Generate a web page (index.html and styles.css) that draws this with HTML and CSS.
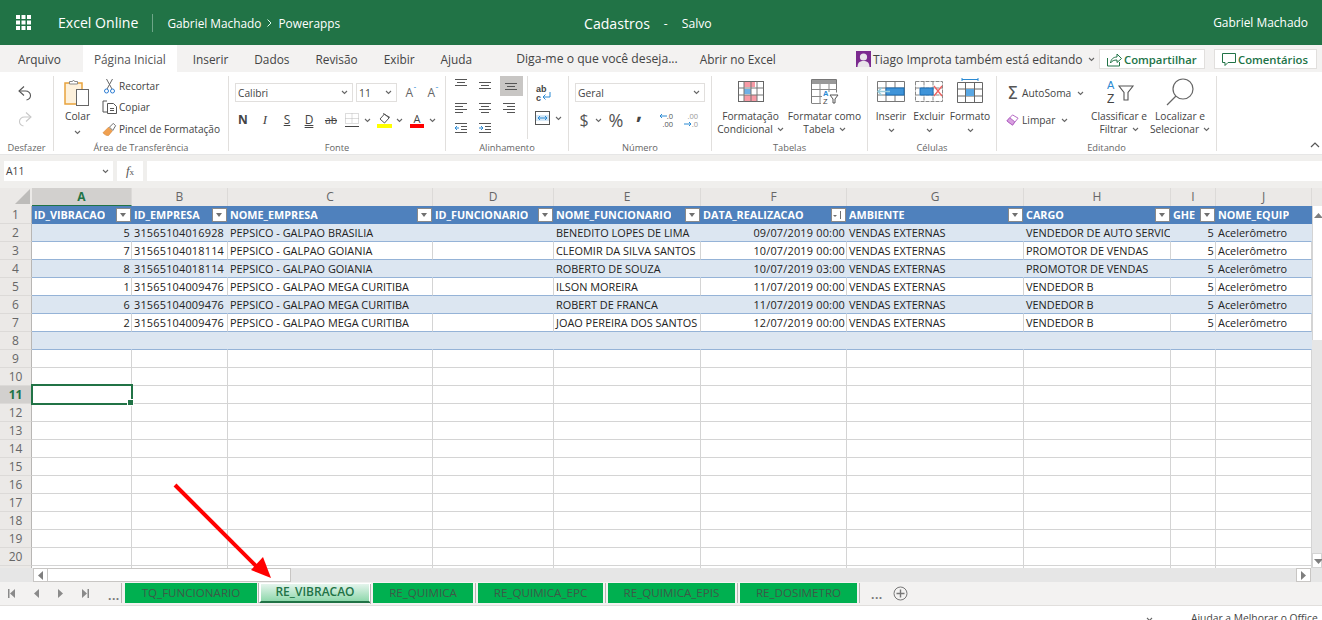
FILE: index.html
```html
<!DOCTYPE html>
<html lang="pt-BR">
<head>
<meta charset="utf-8">
<title>Cadastros - Excel Online</title>
<link rel="stylesheet" href="styles.css">
</head>
<body>
<svg class="defs" width="0" height="0" aria-hidden="true">
  <symbol id="chev" viewBox="0 0 7 5"><path d="M1 1l2.5 2.5L6 1" fill="none" stroke="#666" stroke-width="1.1"/></symbol>
  <symbol id="tri" viewBox="0 0 9 5"><path d="M0 0h9L4.5 5z" fill="#7f7f7f"/></symbol>
</svg>

<header class="topbar">
  <svg class="waffle" width="15" height="15" viewBox="0 0 15 15" fill="#fff"><rect width="4" height="4"/><rect x="5.5" width="4" height="4"/><rect x="11" width="4" height="4"/><rect y="5.5" width="4" height="4"/><rect x="5.5" y="5.5" width="4" height="4"/><rect x="11" y="5.5" width="4" height="4"/><rect y="11" width="4" height="4"/><rect x="5.5" y="11" width="4" height="4"/><rect x="11" y="11" width="4" height="4"/></svg>
  <span class="brand">Excel Online</span>
  <span class="crumbs">Gabriel Machado<svg class="crumb-sep" width="7" height="10" viewBox="0 0 7 10"><path d="M1.5 1.5L5 5 1.5 8.5" fill="none" stroke="#dfe" stroke-width="1"/></svg>Powerapps</span>
  <span class="doc"><span class="doc-name">Cadastros</span><span class="doc-dash">-</span><span class="doc-state">Salvo</span></span>
  <span class="user">Gabriel Machado</span>
</header>

<nav class="tabs">
  <span class="tab first">Arquivo</span>
  <span class="tab active">Página Inicial</span>
  <span class="tab">Inserir</span>
  <span class="tab">Dados</span>
  <span class="tab">Revisão</span>
  <span class="tab">Exibir</span>
  <span class="tab">Ajuda</span>
  <span class="tab tell">Diga-me o que você deseja...</span>
  <span class="tab open">Abrir no Excel</span>
  <span class="coauth">
    <svg width="15" height="16" viewBox="0 0 15 16"><rect width="15" height="16" fill="#7b2a8f"/><circle cx="7.5" cy="6" r="3.6" fill="#e9e4ea"/><path d="M1.5 16c0-4.5 2.5-6 6-6s6 1.500 6 6z" fill="#e9e4ea"/></svg>
    <span>Tiago Improta também está editando</span>
    <svg class="chev" width="7" height="5"><use href="#chev"/></svg>
  </span>
  <span class="pill share">
    <svg width="17" height="16" viewBox="0 0 17 16" fill="none" stroke="#217346"><path d="M1.500 7v8h12V11"/><path d="M4.500 12c.5-4 3-6 6.500-6V3l4.500 4.500L11 11.500V9c-3 0-5 .8-6.500 3z"/></svg>
    Compartilhar
  </span>
  <span class="pill comments">
    <svg width="16" height="15" viewBox="0 0 16 15" fill="none" stroke="#217346"><path d="M1.500 1.500h13v9H7l-3 3v-3H1.500z"/></svg>
    Comentários
  </span>
</nav>

<section class="ribbon">
  <div class="group g-undo">
    <div class="body undo-body">
      <svg width="16" height="16" viewBox="0 0 16 16" fill="none" stroke="#555" stroke-width="1.100"><path d="M7 1.500L2 6l5 4.500"/><path d="M2 6h6.500c3 0 5 2 5 4.500s-2 4-4 4.500"/></svg>
      <svg width="16" height="16" viewBox="0 0 16 16" fill="none" stroke="#c8c8c8" stroke-width="1.100"><path d="M9 1.500L14 6l-5 4.500"/><path d="M14 6H7.500c-3 0-5 2-5 4.500s2 4 4 4.500"/></svg>
    </div>
    <div class="label">Desfazer</div>
  </div>

  <div class="group g-clip">
    <div class="body">
      <div class="paste">
        <svg width="26" height="28" viewBox="0 0 26 28"><rect x="1" y="4" width="17" height="21" fill="#fdf1dc" stroke="#e8a33d" stroke-width="1.500"/><path d="M5.500 5V2.500h3l1-1.500 1 1.500h3V5z" fill="#fff" stroke="#888"/><rect x="12.500" y="10.500" width="12" height="16" fill="#fff" stroke="#666"/></svg>
        <span class="paste-text">Colar</span>
        <svg class="chev" width="7" height="5"><use href="#chev"/></svg>
      </div>
      <div class="clip-list">
        <div class="clip-row"><svg width="14" height="16" viewBox="0 0 14 16" fill="none" stroke="#666"><path d="M4 1l5.500 10M10 1L4.500 11"/><circle cx="4" cy="13" r="2" stroke="#2b7cd3"/><circle cx="10" cy="13" r="2" stroke="#2b7cd3"/></svg><span>Recortar</span></div>
        <div class="clip-row"><svg width="15" height="14" viewBox="0 0 15 14" fill="none" stroke="#555"><path d="M5 1H1v11h4"/><path d="M5.500 3.500h6l3 3v7h-9z" fill="#fff"/><path d="M8 8.500h4M8 10.500h4"/></svg><span>Copiar</span></div>
        <div class="clip-row"><svg width="16" height="16" viewBox="0 0 16 16"><path d="M1 12l6-6 4 4-4 5c-3 0-4-1-6-3z" fill="#f0a050" stroke="#d08030" stroke-width=".6"/><path d="M8 6l4-4 2.500 2.500-3 5z" fill="#fff" stroke="#666"/></svg><span>Pincel de Formatação</span></div>
      </div>
    </div>
    <div class="label">Área de Transferência</div>
  </div>

  <div class="group g-font">
    <div class="body col">
      <div class="font-row1">
        <span class="select font-name">Calibri<svg class="chev" width="7" height="5"><use href="#chev"/></svg></span>
        <span class="select font-size">11<svg class="chev" width="7" height="5"><use href="#chev"/></svg></span>
        <span class="grow">A<sup>ˆ</sup></span>
        <span class="shrink">A<sup>ˇ</sup></span>
      </div>
      <div class="font-row2">
        <b class="fmt">N</b>
        <i class="fmt serif">I</i>
        <span class="fmt under">S</span>
        <span class="fmt under dbl">D</span>
        <span class="fmt strike">ab</span>
        <svg class="borders" width="14" height="14" viewBox="0 0 14 14" fill="none" stroke="#bbb"><path stroke-dasharray="1 1" d="M.500.500h13v10H.500zM7 .500v10M.500 5.500h13"/><path d="M0 13.500h14" stroke="#444"/></svg>
        <svg class="chev c1" width="7" height="5"><use href="#chev"/></svg>
        <svg class="fill" width="15" height="16" viewBox="0 0 15 16"><path d="M3 7l4.500-5L12 6l-4.500 5z" fill="#fff" stroke="#555"/><path d="M6 1.500l7 4" stroke="#555" fill="none"/><rect y="12" width="15" height="4" fill="#ffff00"/></svg>
        <svg class="chev c2" width="7" height="5"><use href="#chev"/></svg>
        <span class="color-a"><span>A</span></span>
        <svg class="chev c3" width="7" height="5"><use href="#chev"/></svg>
      </div>
    </div>
    <div class="label">Fonte</div>
  </div>

  <div class="group g-align">
    <div class="body">
      <div class="align-grid">
        <svg width="24" height="22" viewBox="0 0 24 22" stroke="#555"><path d="M6 3.500h12M8 6.500h8M6 9.500h12"/></svg>
        <svg width="24" height="22" viewBox="0 0 24 22" stroke="#555"><path d="M6 6.500h12M8 9.500h8M6 12.500h12"/></svg>
        <span class="align-on"><svg width="24" height="22" viewBox="0 0 24 22" stroke="#555"><path d="M6 9.500h12M8 12.500h8M6 15.500h12"/></svg></span>
        <svg width="24" height="22" viewBox="0 0 24 22" stroke="#555"><path d="M6 4.500h12M6 7.500h8M6 10.500h12M6 13.500h8"/></svg>
        <svg width="24" height="22" viewBox="0 0 24 22" stroke="#555"><path d="M6 4.500h12M8 7.500h8M6 10.500h12M8 13.500h8"/></svg>
        <svg width="24" height="22" viewBox="0 0 24 22" stroke="#555"><path d="M6 4.500h12M10 7.500h8M6 10.500h12M10 13.500h8"/></svg>
        <svg width="24" height="22" viewBox="0 0 24 22" stroke="#555"><path d="M6 3.500h12M12 6.500h6M12 9.500h6M6 12.500h12"/><path d="M10 8H6m2-2L6 8l2 2" stroke="#2b8ad3" fill="none"/></svg>
        <svg width="24" height="22" viewBox="0 0 24 22" stroke="#555"><path d="M6 3.500h12M12 6.500h6M12 9.500h6M6 12.500h12"/><path d="M6 8h4M8 6l2 2-2 2" stroke="#2b8ad3" fill="none"/></svg>
      </div>
      <div class="align-side">
        <svg class="wrap" width="20" height="20" viewBox="0 0 20 20" fill="none"><text x="2" y="8" font-size="9" font-weight="700" fill="#444" font-family="Liberation Sans">ab</text><text x="2" y="17" font-size="9" font-weight="700" fill="#444" font-family="Liberation Sans">c</text><path d="M16 8v5H9m2.500-2.500L9 13l2.500 2.500" stroke="#2b8ad3"/></svg>
        <div class="merge">
          <svg width="15" height="14" viewBox="0 0 15 14" fill="none"><rect x=".5" y=".5" width="14" height="13" stroke="#555"/><rect x="1" y="4" width="13" height="6" fill="#d5e8f7"/><path d="M3 7h9M5 5L3 7l2 2M10 5l2 2-2 2" stroke="#2b8ad3"/></svg>
          <svg class="chev" width="7" height="5"><use href="#chev"/></svg>
        </div>
      </div>
    </div>
    <div class="label">Alinhamento</div>
  </div>

  <div class="group g-num">
    <div class="body col">
      <span class="select num-format">Geral<svg class="chev" width="7" height="5"><use href="#chev"/></svg></span>
      <div class="num-row">
        <span class="dollar">$</span>
        <svg class="chev" width="7" height="5"><use href="#chev"/></svg>
        <span class="pct">%</span>
        <span class="comma">,</span>
        <span class="dec">
          <small class="dec-line"><svg width="8" height="6" viewBox="0 0 8 6" fill="none" stroke="#2b8ad3"><path d="M8 3H1m2-2L1 3l2 2"/></svg>.0</small>
          <small class="dec-line">.00</small>
        </span>
        <span class="dec light">
          <small class="dec-line">.00</small>
          <small class="dec-line"><svg width="8" height="6" viewBox="0 0 8 6" fill="none" stroke="#2b8ad3"><path d="M0 3h7M5 1l2 2-2 2"/></svg>.0</small>
        </span>
      </div>
    </div>
    <div class="label">Número</div>
  </div>

  <div class="group g-table">
    <div class="body">
      <div class="big w-cond">
        <svg class="big-ic cond" width="26" height="22" viewBox="0 0 26 22"><rect x=".5" y=".5" width="25" height="20" fill="#fff" stroke="#666"/><path d="M6 1h11v5H6zM6 14h13v6H6z" fill="#f79aa5"/><rect x="6" y="8" width="7" height="5" fill="#6fb0e6"/><path d="M6 .500v20M13 .500v20M19 .500v20M.5 7h25M.5 14h25" stroke="#777" fill="none"/></svg>
        <span>Formatação</span>
        <span>Condicional<svg class="chev" width="7" height="5"><use href="#chev"/></svg></span>
      </div>
      <div class="big w-ftable">
        <svg class="big-ic ftable" width="28" height="27" viewBox="0 0 28 27" fill="none"><path d="M.500 24.500V.500h25v13" stroke="#777"/><path d="M1 1h24v4H1z" fill="#999"/><path d="M1 10.500h25M1 17.500h10M9 5v20M18 5v8M1 24.500h9" stroke="#888"/><text x="12" y="16.500" font-size="7.500" fill="#2b8ad3" font-weight="700" font-family="Liberation Sans">A</text><text x="12" y="25" font-size="7.500" fill="#444" font-family="Liberation Sans">Z</text><path d="M19 16h8l-3 4v4h-2v-4z" stroke="#555"/></svg>
        <span>Formatar como</span>
        <span>Tabela<svg class="chev" width="7" height="5"><use href="#chev"/></svg></span>
      </div>
    </div>
    <div class="label">Tabelas</div>
  </div>

  <div class="group g-cell">
    <div class="body">
      <div class="big w-ins">
        <svg class="big-ic cell" width="28" height="22" viewBox="0 0 28 22" fill="none"><path d="M.500 .500h27v20H.500zM9 .5v20M18 .5v20M.5 7h27M.5 14h27" stroke="#777"/><rect x="9" y="7" width="18" height="7" fill="#3f94d9" stroke="#1d6fb5"/><path d="M1 10.500h12M5 6.500l-4 4 4 4" stroke="#9cd" stroke-width="1.500"/></svg>
        <span>Inserir</span>
        <svg class="chev" width="7" height="5"><use href="#chev"/></svg>
      </div>
      <div class="big w-exc">
        <svg class="big-ic cell" width="28" height="22" viewBox="0 0 28 22" fill="none"><path d="M.500 .500h27v20H.500zM9 .5v20M18 .5v20M.5 7h27M.5 14h27" stroke="#888" stroke-dasharray="4 1"/><rect x="5" y="7" width="13" height="7" fill="#3f94d9" stroke="#1d6fb5"/><path d="M19 5l8 10M27 5l-8 10" stroke="#f0605f" stroke-width="1.300"/></svg>
        <span>Excluir</span>
        <svg class="chev" width="7" height="5"><use href="#chev"/></svg>
      </div>
      <div class="big w-fmt">
        <svg class="big-ic fmt-ic" width="26" height="25" viewBox="0 0 26 25" fill="none"><path d="M5 1.500h16M5 0v3M21 0v3" stroke="#2b8ad3"/><path d="M.500 4.500h25v20H.500zM8.500 4.500v20M17.500 4.500v20M.5 11h25M.5 18h25" stroke="#666"/><rect x="9" y="11" width="8" height="7" fill="#5aa7e3"/></svg>
        <span>Formato</span>
        <svg class="chev" width="7" height="5"><use href="#chev"/></svg>
      </div>
    </div>
    <div class="label">Células</div>
  </div>

  <div class="group g-edit">
    <div class="body">
      <div class="edit-list">
        <div class="edit-row"><span class="sigma">Σ</span><span>AutoSoma</span><svg class="chev" width="7" height="5"><use href="#chev"/></svg></div>
        <div class="edit-row"><svg class="eraser" width="14" height="14" viewBox="0 0 14 14"><path d="M1 8l6-6.500L13 5l-6 7.500z" fill="#fff" stroke="#b060c0"/><path d="M1 8l3-3.500L9.500 9 7 12.500z" fill="#d8a0e0" stroke="#b060c0"/></svg><span>Limpar</span><svg class="chev" width="7" height="5"><use href="#chev"/></svg></div>
      </div>
      <div class="big w-sort">
        <svg class="big-ic sort" width="28" height="28" viewBox="0 0 28 28" fill="none"><text x="0" y="11" font-size="11" fill="#2b8ad3" font-family="Liberation Sans">A</text><text x="0" y="25" font-size="12" fill="#444" font-family="Liberation Sans">Z</text><path d="M12 8h14l-5 6.500V22h-4v-7.500z" stroke="#555" stroke-width="1.100"/></svg>
        <span>Classificar e</span>
        <span>Filtrar<svg class="chev" width="7" height="5"><use href="#chev"/></svg></span>
      </div>
      <div class="big w-find">
        <svg class="big-ic find" width="28" height="28" viewBox="0 0 28 28" fill="none" stroke="#666"><circle cx="17" cy="11" r="10" stroke-width="1.200"/><path d="M10 18L1 27" stroke-width="1.200"/></svg>
        <span>Localizar e</span>
        <span>Selecionar<svg class="chev" width="7" height="5"><use href="#chev"/></svg></span>
      </div>
    </div>
    <div class="label">Editando</div>
  </div>

  <svg class="collapse" width="10" height="6" viewBox="0 0 10 6"><path d="M1 5l4-4 4 4" fill="none" stroke="#555" stroke-width="1.200"/></svg>
</section>

<section class="formula">
  <span class="namebox">A11<svg class="chev" width="7" height="5"><use href="#chev"/></svg></span>
  <span class="fx"><i>f</i><small>x</small></span>
  <span class="fbar"></span>
</section>

<section class="sheet">
  <div class="grid-wrap">
    <table class="grid">
      <colgroup><col class="c-h"><col class="c-a"><col class="c-b"><col class="c-c"><col class="c-d"><col class="c-e"><col class="c-f"><col class="c-g"><col class="c-h2"><col class="c-i"><col class="c-j"></colgroup>
      <thead>
        <tr>
          <th class="corner"><svg width="15" height="15" viewBox="0 0 15 15"><path d="M15 0v15H0z" fill="#bdbcba"/></svg></th>
          <th class="col-h sel">A</th><th class="col-h">B</th><th class="col-h">C</th><th class="col-h">D</th><th class="col-h">E</th><th class="col-h">F</th><th class="col-h">G</th><th class="col-h">H</th><th class="col-h">I</th><th class="col-h">J</th>
        </tr>
      </thead>
      <tbody>
        <tr class="tbl-head">
          <th class="row-h">1</th>
          <td><div class="hc"><span>ID_VIBRACAO</span><i class="filter"></i></div></td>
          <td><div class="hc"><span>ID_EMPRESA</span><i class="filter"></i></div></td>
          <td><div class="hc"><span>NOME_EMPRESA</span><i class="filter"></i></div></td>
          <td><div class="hc"><span>ID_FUNCIONARIO</span><i class="filter"></i></div></td>
          <td><div class="hc"><span>NOME_FUNCIONARIO</span><i class="filter"></i></div></td>
          <td><div class="hc"><span>DATA_REALIZACAO</span><i class="filter sorted"></i></div></td>
          <td><div class="hc"><span>AMBIENTE</span><i class="filter"></i></div></td>
          <td><div class="hc"><span>CARGO</span><i class="filter"></i></div></td>
          <td><div class="hc"><span>GHE</span><i class="filter"></i></div></td>
          <td><div class="hc"><span>NOME_EQUIP</span></div></td>
        </tr>
        <tr class="data band"><th class="row-h">2</th><td class="num">5</td><td class="num cnpj">31565104016928</td><td>PEPSICO - GALPAO BRASILIA</td><td></td><td>BENEDITO LOPES DE LIMA</td><td class="num">09/07/2019 00:00</td><td>VENDAS EXTERNAS</td><td>VENDEDOR DE AUTO SERVICO</td><td class="num">5</td><td>Acelerômetro</td></tr>
        <tr class="data"><th class="row-h">3</th><td class="num">7</td><td class="num cnpj">31565104018114</td><td>PEPSICO - GALPAO GOIANIA</td><td></td><td>CLEOMIR DA SILVA SANTOS</td><td class="num">10/07/2019 00:00</td><td>VENDAS EXTERNAS</td><td>PROMOTOR DE VENDAS</td><td class="num">5</td><td>Acelerômetro</td></tr>
        <tr class="data band"><th class="row-h">4</th><td class="num">8</td><td class="num cnpj">31565104018114</td><td>PEPSICO - GALPAO GOIANIA</td><td></td><td>ROBERTO DE SOUZA</td><td class="num">10/07/2019 03:00</td><td>VENDAS EXTERNAS</td><td>PROMOTOR DE VENDAS</td><td class="num">5</td><td>Acelerômetro</td></tr>
        <tr class="data"><th class="row-h">5</th><td class="num">1</td><td class="num cnpj">31565104009476</td><td>PEPSICO - GALPAO MEGA CURITIBA</td><td></td><td>ILSON MOREIRA</td><td class="num">11/07/2019 00:00</td><td>VENDAS EXTERNAS</td><td>VENDEDOR B</td><td class="num">5</td><td>Acelerômetro</td></tr>
        <tr class="data band"><th class="row-h">6</th><td class="num">6</td><td class="num cnpj">31565104009476</td><td>PEPSICO - GALPAO MEGA CURITIBA</td><td></td><td>ROBERT DE FRANCA</td><td class="num">11/07/2019 00:00</td><td>VENDAS EXTERNAS</td><td>VENDEDOR B</td><td class="num">5</td><td>Acelerômetro</td></tr>
        <tr class="data"><th class="row-h">7</th><td class="num">2</td><td class="num cnpj">31565104009476</td><td>PEPSICO - GALPAO MEGA CURITIBA</td><td></td><td>JOAO PEREIRA DOS SANTOS</td><td class="num">12/07/2019 00:00</td><td>VENDAS EXTERNAS</td><td>VENDEDOR B</td><td class="num">5</td><td>Acelerômetro</td></tr>
        <tr class="data band"><th class="row-h">8</th><td></td><td></td><td></td><td></td><td></td><td></td><td></td><td></td><td></td><td></td></tr>
        <tr><th class="row-h">9</th><td></td><td></td><td></td><td></td><td></td><td></td><td></td><td></td><td></td><td></td></tr>
        <tr><th class="row-h">10</th><td></td><td></td><td></td><td></td><td></td><td></td><td></td><td></td><td></td><td></td></tr>
        <tr><th class="row-h cur">11</th><td class="active-cell"></td><td></td><td></td><td></td><td></td><td></td><td></td><td></td><td></td><td></td></tr>
        <tr><th class="row-h">12</th><td></td><td></td><td></td><td></td><td></td><td></td><td></td><td></td><td></td><td></td></tr>
        <tr><th class="row-h">13</th><td></td><td></td><td></td><td></td><td></td><td></td><td></td><td></td><td></td><td></td></tr>
        <tr><th class="row-h">14</th><td></td><td></td><td></td><td></td><td></td><td></td><td></td><td></td><td></td><td></td></tr>
        <tr><th class="row-h">15</th><td></td><td></td><td></td><td></td><td></td><td></td><td></td><td></td><td></td><td></td></tr>
        <tr><th class="row-h">16</th><td></td><td></td><td></td><td></td><td></td><td></td><td></td><td></td><td></td><td></td></tr>
        <tr><th class="row-h">17</th><td></td><td></td><td></td><td></td><td></td><td></td><td></td><td></td><td></td><td></td></tr>
        <tr><th class="row-h">18</th><td></td><td></td><td></td><td></td><td></td><td></td><td></td><td></td><td></td><td></td></tr>
        <tr><th class="row-h">19</th><td></td><td></td><td></td><td></td><td></td><td></td><td></td><td></td><td></td><td></td></tr>
        <tr><th class="row-h">20</th><td></td><td></td><td></td><td></td><td></td><td></td><td></td><td></td><td></td><td></td></tr>
        <tr><th class="row-h"></th><td></td><td></td><td></td><td></td><td></td><td></td><td></td><td></td><td></td><td></td></tr>
      </tbody>
    </table>
    <div class="vscroll">
      <div class="v-head"></div>
      <div class="v-thumb"><svg width="9" height="5"><use href="#tri" transform="rotate(180 4.500 2.500)"/></svg></div>
      <div class="v-track"></div>
      <div class="v-btn"><svg width="9" height="5"><use href="#tri"/></svg></div>
    </div>
  </div>
  <div class="hscroll">
    <span class="h-btn"><svg width="5" height="9" viewBox="0 0 5 9"><path d="M5 0v9L0 4.500z" fill="#7f7f7f"/></svg></span>
    <span class="h-thumb"></span>
    <span class="h-track"></span>
    <span class="h-btn"><svg width="5" height="9" viewBox="0 0 5 9"><path d="M0 0v9l5-4.500z" fill="#7f7f7f"/></svg></span>
  </div>
</section>

<section class="sheetbar">
  <div class="nav">
    <svg width="7" height="9" viewBox="0 0 7 9" fill="#8a8a8a"><path d="M0 0h1.500v9H0zM7 0v9L2 4.500z"/></svg>
    <svg width="5" height="9" viewBox="0 0 5 9" fill="#8a8a8a"><path d="M5 0v9L0 4.500z"/></svg>
    <svg width="5" height="9" viewBox="0 0 5 9" fill="#8a8a8a"><path d="M0 0v9l5-4.500z"/></svg>
    <svg width="7" height="9" viewBox="0 0 7 9" fill="#8a8a8a"><path d="M0 0v9l5-4.500zM5.500 0H7v9H5.500z"/></svg>
    <span class="dots">...</span>
  </div>
  <span class="stab w1">TQ_FUNCIONARIO</span>
  <span class="stab on w2">RE_VIBRACAO</span>
  <span class="stab w3">RE_QUIMICA</span>
  <span class="stab w4">RE_QUIMICA_EPC</span>
  <span class="stab w5">RE_QUIMICA_EPIS</span>
  <span class="stab w6">RE_DOSIMETRO</span>
  <span class="dots more">...</span>
  <svg class="add" width="15" height="15" viewBox="0 0 15 15" fill="none" stroke="#777"><circle cx="7.500" cy="7.500" r="6.500"/><path d="M7.500 3.500v8M3.500 7.500h8" stroke-width="1.400"/></svg>
</section>

<footer class="status">
  <svg class="chev" width="7" height="5"><use href="#chev"/></svg>
  <span>Ajudar a Melhorar o Office</span>
</footer>

<svg class="arrow" width="110" height="110" viewBox="0 0 110 110"><path d="M4 4L88 88" stroke="#ff0000" stroke-width="4"/><path d="M80 89L92 76 100 97z" fill="#ff0000"/></svg>
</body>
</html>
```
FILE: styles.css
```css
* { box-sizing: border-box; }
html, body { margin: 0; height: 620px; overflow: hidden; }
body { font-family: "Open Sans", "Noto Sans", sans-serif; font-size: 11px; color: #444; background: #fff; position: relative; width: 1322px; }
.defs { position: absolute; }
svg { display: block; flex: none; }
small { font-size: inherit; }

/* title bar */
.topbar { height: 45px; background: #217346; color: #fff; display: flex; align-items: center; position: relative; }
.waffle { margin-left: 16px; }
.brand { margin-left: 27px; font-size: 14.100px; padding-right: 14px; border-right: 1px solid #6da688; height: 18px; line-height: 18px; white-space: nowrap; }
.crumbs { margin-left: 14px; font-size: 11.850px; display: flex; align-items: center; white-space: nowrap; }
.crumb-sep { margin: 0 5px 0 5px; }
.doc { position: absolute; left: 584px; top: 14px; display: flex; align-items: center; height: 18px; }
.doc-name { font-size: 14.100px; }
.doc-dash { margin-left: 14px; font-size: 12px; }
.doc-state { margin-left: 14px; font-size: 12.200px; }
.user { margin-left: auto; margin-right: 14px; font-size: 11.950px; white-space: nowrap; }

/* tab strip */
.tabs { height: 27px; background: #f3f2f1; display: flex; align-items: stretch; color: #444; font-size: 11.850px; white-space: nowrap; }
.tab { display: flex; align-items: center; margin-right: 26px; }
.tab.first { margin-left: 18px; margin-right: 22px; }
.tab.active { background: #fff; padding: 0 11px; margin-right: 16px; color: #555; }
.tab.tell { margin-left: 18px; margin-right: 22px; font-size: 12.200px; }
.tab.open { margin-right: 0; }
.coauth { display: flex; align-items: center; gap: 2px; position: absolute; left: 856px; top: 51px; height: 16px; font-size: 12.100px; }
.coauth .chev { margin-left: 3px; }
.pill { position: absolute; top: 49px; height: 20px; background: #fff; border: 1px solid #e1dfdd; color: #217346; display: flex; align-items: center; gap: 1px; font-size: 11.300px; font-weight: 600; padding-left: 6px; }
.pill.share { left: 1099px; width: 106px; }
.pill.comments { left: 1214px; width: 103px; }

/* ribbon */
.ribbon { height: 83px; background: #fff; display: flex; padding-top: 4px; position: relative; color: #444; border-bottom: 1px solid #e6e6e6; }
.group { height: 75px; border-right: 1px solid #e1dfdd; flex: none; }
.body { height: 64px; display: flex; }
.body.col { flex-direction: column; }
.label { height: 14px; line-height: 16px; text-align: center; font-size: 9.300px; color: #666; white-space: nowrap; }
.g-undo { width: 54px; }
.g-clip { width: 175px; }
.g-font { width: 217px; }
.g-align { width: 123px; }
.g-num { width: 143px; }
.g-table { width: 156px; }
.g-cell { width: 129px; }
.g-edit { width: 220px; }
.undo-body { flex-direction: column; align-items: center; padding: 9px 3px 0 0; gap: 10px; }

.paste { width: 46px; display: flex; flex-direction: column; align-items: center; padding-top: 3px; font-size: 10.300px; }
.paste-text { margin-top: 0; line-height: 18px; padding-left: 1px; }
.paste .chev { margin-top: 5px; }
.clip-list { margin-top: -1px; }
.clip-row { height: 21.500px; display: flex; align-items: center; font-size: 10.100px; white-space: nowrap; }
.clip-row svg { margin: 0 2px 0 2px; width: 15px; }

.font-row1 { display: flex; align-items: center; padding: 7px 0 0 6px; }
.select { height: 19px; border: 1px solid #e1dfdd; display: flex; align-items: center; justify-content: space-between; padding: 0 4px 0 2px; font-size: 10.200px; flex: none; }
.font-name { width: 118px; }
.font-size { width: 41px; margin-left: 3px; font-size: 10.400px; }
.grow, .shrink { font-size: 12px; color: #666; display: flex; width: 22px; justify-content: center; }
.grow { margin-left: 3px; }
.grow sup, .shrink sup { font-size: 8px; line-height: 10px; color: #2b8ad3; }
.font-row2 { display: flex; align-items: center; height: 18px; margin-top: 9px; padding-left: 3px; }
.fmt { width: 22px; text-align: center; font-size: 12px; line-height: 16px; color: #444; flex: none; }
.fmt.serif { font-family: "Liberation Serif", serif; font-size: 13px; }
.fmt.under { text-decoration: underline; }
.fmt.dbl { text-decoration-style: double; }
.fmt.strike { text-decoration: line-through; font-size: 10.400px; }
.borders { margin-left: 3px; }
.c1 { margin-left: 4.500px; }
.fill { margin-left: 6.500px; }
.c2 { margin-left: 3.500px; }
.color-a { margin-left: 7.500px; width: 14px; height: 16px; text-align: center; font-size: 11px; line-height: 13px; border-bottom: 4px solid #f00; }
.c3 { margin-left: 4.500px; }

.align-grid { width: 82px; padding-left: 3px; border-right: 1px solid #e1dfdd; height: 63px; display: grid; grid-template-columns: repeat(3, 24px); grid-template-rows: 22px 22px 19px; align-content: start; }
.align-on { background: #c8c6c4; width: 23px; height: 20px; margin-left: 3px; overflow: hidden; }
.align-on svg { margin: -2px 0 0 -1px; }
.align-grid > svg:nth-child(4), .align-grid > svg:nth-child(5), .align-grid > svg:nth-child(6) { margin-top: 1px; }
.align-side { padding: 8px 0 0 6px; }
.merge { display: flex; align-items: center; gap: 5px; margin-top: 7px; margin-left: 1px; }

.num-format { width: 130px; margin: 7px 0 0 6px; font-size: 10.300px; padding-left: 2px; }
.num-row { display: flex; align-items: center; height: 22px; margin-top: 7px; padding-left: 10px; }
.dollar { font-size: 16px; width: 10px; line-height: 22px; color: #555; text-align: center; }
.num-row .chev { margin-left: 5.500px; }
.pct { font-size: 18px; margin-left: 4.500px; color: #555; width: 20px; text-align: center; }
.comma { font-size: 22px; font-weight: 700; margin-left: 10px; margin-top: -14px; line-height: 16px; height: 22px; color: #444; width: 8px; }
.dec { display: flex; flex-direction: column; font-size: 7.500px; line-height: 8px; margin-left: 13px; width: 16px; color: #555; align-items: flex-end; }
.dec-line { display: flex; align-items: center; }
.dec.light { margin-left: 9px; color: #999; }

.big { display: flex; flex-direction: column; align-items: center; font-size: 10.200px; line-height: 13px; white-space: nowrap; flex: none; }
.big > span { display: flex; align-items: center; gap: 4px; height: 13px; }
.big > .chev { margin-top: 5px; }
.big-ic { margin-bottom: 7px; }
.w-cond { width: 73px; margin-left: 2px; padding-top: 5px; }
.big-ic.cond { margin-bottom: 7px; }
.w-ftable { width: 75px; padding-top: 3px; }
.big-ic.ftable { margin-bottom: 4px; }
.w-ins { width: 40px; padding-top: 5px; margin-left: 3px; }
.w-exc { width: 36px; padding-top: 5px; }
.w-fmt { width: 46px; padding-top: 2px; }
.big-ic.cell { margin-bottom: 7px; }
.big-ic.fmt-ic { margin-bottom: 7px; }

.edit-list { width: 89px; padding: 7px 0 0 9px; font-size: 10.200px; }
.edit-row { display: flex; align-items: center; height: 20px; gap: 3px; white-space: nowrap; }
.edit-row + .edit-row { margin-top: 7px; }
.edit-row .chev { margin-left: 3px; }
.sigma { font-size: 17px; color: #555; font-family: "DejaVu Sans", sans-serif; width: 13px; line-height: 20px; text-align: center; }
.eraser { width: 13px; }
.w-sort { width: 66px; padding-top: 2px; }
.big-ic.sort { margin-bottom: 4px; margin-left: 3px; }
.w-find { width: 56px; padding-top: 2px; }
.big-ic.find { margin-bottom: 4px; }
.collapse { position: absolute; left: 1310px; top: 70px; }

/* formula bar */
.formula { height: 33px; background: #f0efed; display: flex; align-items: flex-start; padding: 6px 0 0 4px; }
.namebox { width: 109px; height: 20px; background: #fff; display: flex; align-items: center; justify-content: space-between; padding: 0 4px 0 2px; font-size: 10.400px; }
.fx { width: 26px; height: 20px; background: #fff; margin-left: 4px; text-align: center; font-family: "Liberation Serif", serif; font-size: 13px; line-height: 19px; color: #555; }
.fx small { font-size: 9px; }
.fbar { flex: 1; height: 20px; background: #fff; margin-left: 4px; }

/* sheet */
.sheet { height: 394px; background: #e6e6e6; }
.grid-wrap { height: 380px; display: flex; overflow: hidden; background: #fff; }
.grid { border-collapse: separate; border-spacing: 0; table-layout: fixed; width: 1312px; flex: none; align-self: flex-start; font-size: 10.900px; color: #222; }
.c-h { width: 32px; } .c-a { width: 100px; } .c-b { width: 96px; } .c-c { width: 205px; } .c-d { width: 121px; } .c-e { width: 147px; } .c-f { width: 146px; } .c-g { width: 177px; } .c-h2 { width: 147px; } .c-i { width: 45px; } .c-j { width: 96px; }
.grid tr { height: 18px; }
.grid td { height: 18px; padding: 0 2px; border-right: 1px solid #d4d4d4; border-bottom: 1px solid #d4d4d4; white-space: nowrap; overflow: hidden; line-height: 16px; }
.grid td.num { text-align: right; padding-right: 1px; letter-spacing: .2px; }
.grid td.cnpj { padding-right: 3px; }
.corner { background: #ebe9e7; padding: 1px 0 0 15px; vertical-align: top; font-weight: 400; }
.col-h { height: 18px; background: #ebe9e7; border-right: 1px solid #dcdad8; font-weight: 400; font-size: 12px; color: #666; line-height: 16px; padding: 0; }
.col-h.sel { background: #d2d0ce; color: #217346; font-weight: 700; border-bottom: 1px solid #217346; }
.row-h { background: #ebe9e7; font-weight: 400; font-size: 12px; color: #666; border-right: 1px solid #b8b6b4; border-bottom: 1px solid #dcdad8; padding: 0; line-height: 16px; height: 18px; }
.row-h.cur { background: #d2d0ce; color: #217346; font-weight: 700; }
.tbl-head td { background: #4f81bd; color: #fff; font-weight: 700; border-right: 0; border-bottom: 1px solid #4f81bd; padding: 0 0 0 2px; font-size: 10.800px; }
.hc { display: flex; justify-content: space-between; align-items: center; height: 17px; overflow: hidden; }
.hc span { overflow: hidden; }
.filter { flex: none; width: 15px; height: 14px; background: #fff; border: 1px solid #8a8a8a; position: relative; margin-right: 1px; }
.filter::after { content: ""; position: absolute; left: 3px; top: 4px; border: 3.500px solid transparent; border-top: 4px solid #707070; border-bottom: 0; }
.filter.sorted::after { left: 1px; top: 6px; border-width: 2px 2px 0; }
.filter.sorted::before { content: ""; position: absolute; left: 8px; top: 2px; width: 1px; height: 8px; background: #707070; }
.data td { border-bottom-color: #95b3d7; }
.band td { background: #dce6f1; border-right-color: #dce6f1; }
.active-cell { position: relative; overflow: visible !important; }
.active-cell::before { content: ""; position: absolute; left: -1px; top: -2px; right: -2px; bottom: -2px; border: 2px solid #217346; }
.active-cell::after { content: ""; position: absolute; right: -3px; bottom: -3px; width: 5px; height: 5px; background: #217346; border: 1px solid #fff; }

.vscroll { width: 10px; flex: none; display: flex; flex-direction: column; background: #e6e6e6; }
.v-head { height: 18px; background: #ebe9e7; }
.v-thumb { height: 134px; background: #fff; padding: 7px 0 0 1px; border-left: 1px solid #d4d4d4; }
.v-track { flex: 1; }
.v-btn { height: 15px; background: #fff; padding: 5px 0 0 1px; border: 1px solid #d4d4d4; }

.hscroll { height: 14px; display: flex; padding-left: 33px; padding-right: 11px; }
.h-btn { width: 15px; height: 14px; background: #fff; border: 1px solid #c8c6c4; display: flex; align-items: center; justify-content: center; flex: none; }
.h-thumb { width: 243px; height: 14px; background: #fff; border: 1px solid #c8c6c4; border-left: 0; }
.h-track { flex: 1; }

/* sheet tabs */
.sheetbar { height: 24px; background: #f3f2f1; border-bottom: 1px solid #e1dfdd; display: flex; align-items: flex-start; padding-top: 1px; }
.nav { width: 122px; height: 20px; border-right: 1px solid #b8b6b4; display: flex; align-items: center; padding-left: 8px; gap: 19px; flex: none; }
.dots { font-size: 12px; font-weight: 700; color: #777; letter-spacing: .5px; line-height: 12px; padding-top: 6px; }
.stab { height: 20px; background: #00b050; color: #3d5a48; display: flex; align-items: center; justify-content: center; font-size: 11.600px; margin-right: 5px; position: relative; flex: none; padding-bottom: 2px; white-space: nowrap; }
.stab::after { content: ""; position: absolute; right: -3px; top: 0; height: 20px; width: 1px; background: #b8b6b4; }
.w1 { width: 132px; margin-left: 3px; margin-right: 2px; }
.w2 { width: 112px; margin-right: 2px; }
.w3 { width: 100px; }
.w4 { width: 125px; }
.w5 { width: 127px; }
.w6 { width: 117px; }
.stab.on { background: linear-gradient(#e4f4ec, #8fd8ac); color: #217346; font-size: 12px; font-weight: 600; border: 2px solid #fff; border-bottom: 2px solid #217346; border-top: 1px solid #fff; }
.stab.w1::after, .stab.w2::after { right: -2px; }
.more { margin-left: 9px; }
.add { margin: 3px 0 0 10px; }

.status { height: 14px; overflow: hidden; background: #fff; display: flex; font-size: 10.300px; color: #444; padding-top: 5px; }
.status .chev { margin: 6px 0 0 1146px; }
.status span { margin-left: 38px; white-space: nowrap; line-height: 14px; }

.arrow { position: absolute; left: 171px; top: 481px; }
```
